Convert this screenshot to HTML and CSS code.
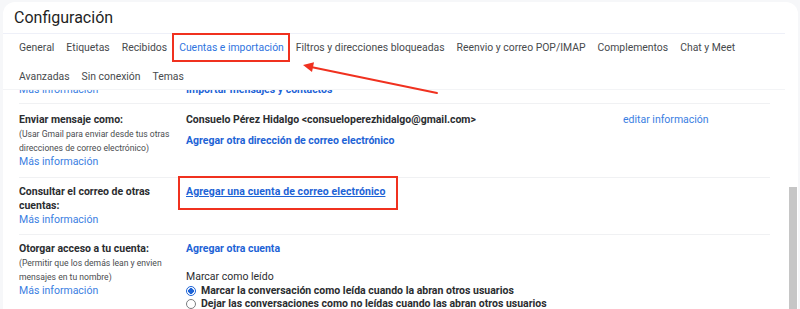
FILE: index.html
```html
<!DOCTYPE html>
<html lang="es">
<head>
<meta charset="utf-8">
<title>Configuración</title>
<link rel="stylesheet" href="styles.css">
</head>
<body>
<div class="page">
  <div class="card">
    <header class="head"><h1 class="title">Configuración</h1></header>
    <nav class="tabs">
      <span class="tab">General</span>
      <span class="tab">Etiquetas</span>
      <span class="tab">Recibidos</span>
      <span class="tab tab-active">Cuentas e importación</span>
      <span class="tab">Filtros y direcciones bloqueadas</span>
      <span class="tab">Reenvio y correo POP/IMAP</span>
      <span class="tab">Complementos</span>
      <span class="tab">Chat y Meet</span>
      <span class="tab">Avanzadas</span>
      <span class="tab">Sin conexión</span>
      <span class="tab">Temas</span>
    </nav>
    <div class="body">
      <div class="content">
        <div class="row row-partial">
          <div class="lab"><a class="more">Más información</a></div>
          <div class="val"><a class="link">Importar mensajes y contactos</a></div>
          <div class="edit"></div>
        </div>
        <div class="row row-send">
          <div class="lab">
            <div class="lab-title">Enviar mensaje como:</div>
            <div class="lab-sub">(Usar Gmail para enviar desde tus otras direcciones de correo electrónico)</div>
            <a class="more">Más información</a>
          </div>
          <div class="val">
            <div class="strong">Consuelo Pérez Hidalgo &lt;consueloperezhidalgo@gmail.com&gt;</div>
            <a class="link link-gap">Agregar otra dirección de correo electrónico</a>
          </div>
          <div class="edit"><a class="more">editar información</a></div>
        </div>
        <div class="row row-check">
          <div class="lab">
            <div class="lab-title">Consultar el correo de otras cuentas:</div>
            <a class="more">Más información</a>
          </div>
          <div class="val">
            <a class="link link-under boxed">Agregar una cuenta de correo electrónico</a>
          </div>
          <div class="edit"></div>
        </div>
        <div class="row row-grant">
          <div class="lab">
            <div class="lab-title">Otorgar acceso a tu cuenta:</div>
            <div class="lab-sub">(Permitir que los demás lean y envien mensajes en tu nombre)</div>
            <a class="more">Más información</a>
          </div>
          <div class="val val-wide">
            <a class="link">Agregar otra cuenta</a>
            <div class="plain mark-title">Marcar como leído</div>
            <label class="opt"><span class="radio radio-on"></span><span class="strong">Marcar la conversación como leída cuando la abran otros usuarios</span></label>
            <label class="opt"><span class="radio"></span><span class="strong">Dejar las conversaciones como no leídas cuando las abran otros usuarios</span></label>
          </div>
        </div>
      </div>
      <div class="track"><div class="thumb"></div></div>
    </div>
  </div>
  <svg class="arrow" width="800" height="309" viewBox="0 0 800 309" aria-hidden="true">
    <line x1="437" y1="93" x2="311" y2="67" stroke="#f0311f" stroke-width="2" stroke-linecap="round"/>
    <polygon points="303,65 314,62.2 312,72" fill="#f0311f"/>
  </svg>
</div>
</body>
</html>
```

FILE: styles.css
```css
* { box-sizing: border-box; }
html, body { margin: 0; padding: 0; }
body {
  background: #f6f7f9;
  font-family: Roboto, "Noto Sans", Arial, sans-serif;
  color: #202124;
  height: 309px;
  overflow: hidden;
}
.page { position: relative; width: 800px; height: 309px; overflow: hidden; }
.card {
  margin: 2px 2px 0 3px;
  height: 307px;
  background: #fff;
  border-radius: 12px 12px 0 0;
  display: flex;
  flex-direction: column;
}
.head {
  height: 32px;
  padding-left: 11px;
  margin-right: 13px;
  border-bottom: 1px solid #eef0f8;
}
.title {
  margin: 0;
  font-weight: 400;
  font-size: 16px;
  line-height: 31px;
  color: #1f1f1f;
}
.tabs {
  display: flex;
  flex-wrap: wrap;
  column-gap: 12px;
  row-gap: 15px;
  padding: 7px 20px 5px 16px;
  margin-right: 13px;
  border-bottom: 1px solid #f3f4f6;
}
.tab {
  font-size: 10.4px;
  line-height: 14px;
  color: #474a4d;
  white-space: nowrap;
}
.tab-active { color: #2f74e0; position: relative; }
.tab-active::after {
  content: "";
  position: absolute;
  left: -7px; right: -6px; top: -8px; bottom: -7px;
  border: 2px solid #f0311f;
}
.body {
  flex: 1;
  display: flex;
  overflow: hidden;
}
.content {
  flex: 1;
  margin-left: 16px;
  margin-right: 19px;
  overflow: hidden;
}
.track { width: 8px; margin-right: 1px; }
.thumb { margin-top: 97px; height: 200px; background: #c6c6c6; }
.row {
  display: grid;
  grid-template-columns: 167px 437px 1fr;
  border-bottom: 1px solid #f0f1f3;
  font-size: 10.5px;
  line-height: 14px;
}
.row-partial { margin-top: -7px; padding-bottom: 6px; }
.row-send { padding: 9px 0 8px; }
.row-check { padding: 7px 0 7px; }
.row-grant { padding: 7px 0 0; border-bottom: 0; }
.val-wide { grid-column: 2 / 4; }
.lab-title { font-weight: 700; color: #2b2d30; padding-right: 24px; }
.lab-sub { font-size: 8.6px; color: #4a4c4f; padding-right: 10px; }
.more { color: #3a7ee2; text-decoration: none; display: block; }
.link { color: #1d63d6; font-weight: 700; text-decoration: none; display: inline-block; }
.link-gap { margin-top: 7px; }
.link-under { text-decoration: underline; letter-spacing: 0.1px; }
.boxed { position: relative; }
.boxed::after {
  content: "";
  position: absolute;
  left: -8px; right: -13px; top: -9px; bottom: -11px;
  border: 2px solid #f0311f;
}
.strong { font-weight: 700; color: #2b2d30; }
.edit { padding-left: 0; }
.plain { color: #2b2d30; }
.mark-title { margin-top: 14px; }
.opt { display: flex; align-items: center; gap: 5px; line-height: 13px; }
.radio {
  width: 10px; height: 10px;
  border-radius: 50%;
  border: 1px solid #7a7d80;
  flex: none;
}
.radio-on {
  border: 1.5px solid #1d63d6;
  background: radial-gradient(circle, #1d63d6 0 2.6px, #fff 3px);
}
.arrow { position: absolute; left: 0; top: 0; pointer-events: none; }
```
